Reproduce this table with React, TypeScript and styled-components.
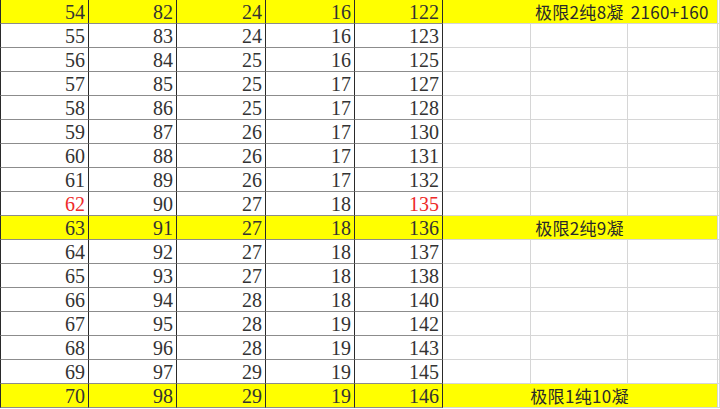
import * as React from 'react'
import styled, { createGlobalStyle } from 'styled-components'

type RowData = {
    values: number[]
    note?: string
    noteAlign?: 'left' | 'center'
    highlight?: boolean
    redCols?: number[]
}

const rows: RowData[] = [
    { values: [54, 82, 24, 16, 122], highlight: true, note: '极限2纯8凝 2160+160', noteAlign: 'left' },
    { values: [55, 83, 24, 16, 123] },
    { values: [56, 84, 25, 16, 125] },
    { values: [57, 85, 25, 17, 127] },
    { values: [58, 86, 25, 17, 128] },
    { values: [59, 87, 26, 17, 130] },
    { values: [60, 88, 26, 17, 131] },
    { values: [61, 89, 26, 17, 132] },
    { values: [62, 90, 27, 18, 135], redCols: [0, 4] },
    { values: [63, 91, 27, 18, 136], highlight: true, note: '极限2纯9凝', noteAlign: 'center' },
    { values: [64, 92, 27, 18, 137] },
    { values: [65, 93, 27, 18, 138] },
    { values: [66, 94, 28, 18, 140] },
    { values: [67, 95, 28, 19, 142] },
    { values: [68, 96, 28, 19, 143] },
    { values: [69, 97, 29, 19, 145] },
    { values: [70, 98, 29, 19, 146], highlight: true, note: '极限1纯10凝', noteAlign: 'center' },
]

export default function App() {
    return (
        <>
            <GlobalStyle />
            <Sheet>
                {rows.map((row, i) => (
                    <Row key={i}>
                        {row.values.map((v, c) => (
                            <Num key={c} $fill={row.highlight} $red={row.redCols?.includes(c)} $first={i === 0}>
                                {v}
                            </Num>
                        ))}
                        {row.highlight ? (
                            <NoteBand>
                                <NoteText $align={row.noteAlign || 'center'}>{row.note}</NoteText>
                            </NoteBand>
                        ) : (
                            <>
                                <Blank />
                                <Blank />
                                <Blank />
                            </>
                        )}
                        <Blank />
                    </Row>
                ))}
            </Sheet>
        </>
    )
}

const GlobalStyle = createGlobalStyle`
  html, body {
    margin: 0;
    padding: 0;
    background: #ffffff;
    overflow: hidden;
  }
`

const Sheet = styled.div`
  width: 720px;
  height: 409px;
  overflow: hidden;
  background: #ffffff;
`

const Row = styled.div`
  display: grid;
  grid-template-columns: 89px 88px 89px 89px 88px 88px 97px 90px 1fr;
  height: 24px;
`

const Num = styled.div<{ $fill?: boolean; $red?: boolean; $first?: boolean }>`
  box-sizing: border-box;
  height: ${p => (p.$first ? '25px' : '24px')};
  margin-top: ${p => (p.$first ? '-1px' : '0')};
  border-top: ${p => (p.$first ? '1px solid #555' : 'none')};
  border-right: 1px solid #2a2a2a;
  border-bottom: 1px solid #8c8c8c;
  &:first-child {
    border-left: 1px solid #2a2a2a;
  }
  background: ${p => (p.$fill ? '#ffff00' : '#ffffff')};
  color: ${p => (p.$red ? '#ee2a2a' : '#333333')};
  font-family: "Liberation Serif", "DejaVu Serif", serif;
  font-size: 20px;
  line-height: 24px;
  text-align: right;
  padding-right: 3px;
`

const Blank = styled.div`
  box-sizing: border-box;
  height: 24px;
  border-right: 1px solid #d6d6d6;
  border-bottom: 1px solid #d6d6d6;
`

const NoteBand = styled.div`
  grid-column: span 3;
  display: grid;
  grid-template-columns: 88px 97px 89px;
  box-sizing: border-box;
  height: 24px;
  background: #ffff00;
  border-right: 1px solid #d6d6d6;
  border-bottom: 1px solid #d6d6d6;
`

const NoteText = styled.div<{ $align: 'left' | 'center' }>`
  grid-column: 2;
  justify-self: ${p => (p.$align === 'left' ? 'start' : 'center')};
  padding-left: ${p => (p.$align === 'left' ? '4px' : '0')};
  white-space: nowrap;
  word-spacing: 3px;
  letter-spacing: 0.3px;
  font-family: "Noto Sans CJK SC", "Noto Sans", sans-serif;
  font-size: 17px;
  line-height: 24px;
  color: #2a2a2a;
`
